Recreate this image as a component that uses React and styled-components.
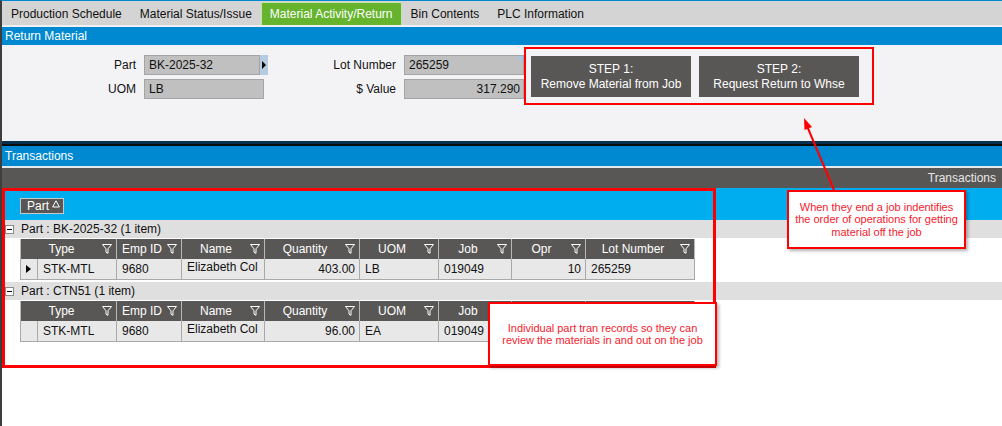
import React from "react"
import styled, { createGlobalStyle } from "styled-components"

const GlobalStyle = createGlobalStyle`
  html, body {
    margin: 0;
    padding: 0;
    background: #fff;
  }
  body {
    font-family: "Liberation Sans", Arial, sans-serif;
    font-size: 12px;
    color: #000;
  }
`

const Page = styled.div`
  position: relative;
  width: 1002px;
  height: 426px;
  overflow: hidden;
  box-sizing: border-box;
  background: #fff;
  border-left: 2px solid #3d3d3d;
  border-top: 1px solid #0088d0;
`

const TabBar = styled.div`
  display: flex;
  align-items: stretch;
  height: 26px;
  box-sizing: border-box;
  background: #d4d4d4;
  border-bottom: 2px solid #eef0f2;
`

const Tab = styled.div`
  display: flex;
  align-items: center;
  padding: 0 8px;
  margin-top: 1px;
  color: ${(p) => (p.$active ? "#fff" : "#111")};
  background: ${(p) => (p.$active ? "#66b42e" : "transparent")};
  border: 1px solid ${(p) => (p.$active ? "#c4e4ae" : "transparent")};
  border-bottom: none;
  border-radius: 2px 2px 0 0;
`

const SectionHeader = styled.div`
  height: ${(p) => p.$h}px;
  line-height: ${(p) => p.$h}px;
  background: #0089d1;
  color: #fff;
  padding-left: 3px;
`

const Panel = styled.div`
  height: 96px;
  box-sizing: border-box;
  background: #f3f3f6;
  display: flex;
  align-items: flex-start;
  padding-top: 2px;
`

const FieldGrid = styled.div`
  display: grid;
  grid-template-columns: ${(p) => p.$label}px auto;
  column-gap: 8px;
  row-gap: 4px;
  margin-top: 8px;
  align-items: center;
`

const Label = styled.div`
  text-align: right;
  color: #111;
`

const FieldWrap = styled.div`
  display: flex;
`

const Field = styled.div`
  position: relative;
  width: ${(p) => p.$w}px;
  height: 20px;
  box-sizing: border-box;
  background: #c0c0c0;
  border: 1px solid #a4a4a4;
  padding: 0 ${(p) => (p.$right ? 3 : 4)}px;
  line-height: 18px;
  text-align: ${(p) => (p.$right ? "right" : "left")};
  color: #111;

  ${(p) =>
    p.$corner &&
    `
    &::after {
      content: "";
      position: absolute;
      top: 0;
      right: 0;
      border-top: 7px solid #a9c4de;
      border-left: 7px solid transparent;
    }
  `}
`

const DropButton = styled.div`
  width: 8px;
  height: 20px;
  background: #b7cbe0;
  display: flex;
  align-items: center;
  justify-content: center;

  &::before {
    content: "";
    border-left: 4px solid #000;
    border-top: 4px solid transparent;
    border-bottom: 4px solid transparent;
  }
`

const StepBox = styled.div`
  display: flex;
  gap: 8px;
  border: 2px solid #f00;
  padding: 7px 13px 6px 5px;
`

const StepButton = styled.div`
  width: 160px;
  height: 41px;
  background: #595755;
  color: #fff;
  display: flex;
  flex-direction: column;
  justify-content: center;
  align-items: center;
  line-height: 15px;
`

const Divider = styled.div`
  height: 5px;
  box-sizing: border-box;
  background: #08314f;
  border-bottom: 2px solid #0c0c0c;
`

const ToolStrip = styled.div`
  height: 22px;
  box-sizing: border-box;
  border-top: 2px solid #e3e8ec;
  background: #595755;
  color: #e6e6e6;
  text-align: right;
  padding-right: 6px;
  line-height: 20px;
`

const GroupByBar = styled.div`
  height: 32px;
  box-sizing: border-box;
  background: #00adef;
  padding: 10px 0 0 18px;
`

const GroupChip = styled.div`
  display: inline-flex;
  align-items: center;
  gap: 3px;
  width: 44px;
  height: 16px;
  box-sizing: border-box;
  padding-left: 6px;
  background: #595755;
  color: #fff;
  border: 1px solid #c9c9c9;
`

const GroupRow = styled.div`
  height: 18px;
  background: #dfdfdf;
  display: flex;
  align-items: center;
  gap: 7px;
  padding-left: 3px;
  margin-top: ${(p) => p.$gap || 0}px;
  color: #111;
`

const Expander = styled.div`
  width: 9px;
  height: 9px;
  box-sizing: border-box;
  background: #fff;
  border: 1px solid #8a8a8a;
  display: flex;
  align-items: center;
  justify-content: center;

  &::before {
    content: "";
    width: 5px;
    height: 1px;
    background: #000;
  }
`

const Grid = styled.div`
  display: grid;
  grid-template-columns: 18px 79px 65px 83px 95px 79px 73px 74px 109px;
  width: max-content;
  margin: 1px 0 0 18px;
`

const HeadCell = styled.div`
  grid-column: span ${(p) => p.$span || 1};
  height: 20px;
  box-sizing: border-box;
  background: #595755;
  color: #fff;
  display: flex;
  align-items: center;
  border-right: 1px solid #b8b8b8;

  &:first-child {
    border-left: 1px solid #b8b8b8;
  }

  span {
    flex: 1;
    text-align: center;
  }

  svg {
    margin-right: 4px;
  }
`

const Cell = styled.div`
  height: 21px;
  box-sizing: border-box;
  background: #e8e8e8;
  border-right: 1px solid #a9a9a9;
  border-bottom: 1px solid #a9a9a9;
  padding: 0 4px 0 5px;
  line-height: ${(p) => (p.$raised ? 16 : 20)}px;
  text-align: ${(p) => (p.$right ? "right" : "left")};
  white-space: nowrap;
  overflow: hidden;
  color: #111;
`

const SelectorCell = styled(Cell)`
  border-left: 1px solid #a9a9a9;
  display: flex;
  align-items: center;
  padding-left: 5px;

  ${(p) =>
    p.$current &&
    `
    &::before {
      content: "";
      border-left: 5px solid #000;
      border-top: 4px solid transparent;
      border-bottom: 4px solid transparent;
    }
  `}
`

const AnnotationBox = styled.div`
  position: absolute;
  left: ${(p) => p.$x}px;
  top: ${(p) => p.$y}px;
  width: ${(p) => p.$w}px;
  height: ${(p) => p.$h}px;
  box-sizing: border-box;
  border: 3px solid #f00;
  pointer-events: none;
`

const Callout = styled(AnnotationBox)`
  border-width: 2px;
  background: #fff;
  box-shadow: 2px 2px 3px rgba(0, 0, 0, 0.3);
  display: flex;
  flex-direction: column;
  justify-content: center;
  align-items: center;
  text-align: center;
  color: #f51a2e;
  font-size: 11px;
  line-height: 12.5px;
`

const ArrowLayer = styled.svg`
  position: absolute;
  left: 0;
  top: 0;
  pointer-events: none;
`

const Funnel = () => (
  <svg width="10" height="10" viewBox="0 0 10 10">
    <path d="M0.5 0.5 H9.5 L6 4.8 V9.3 L4 8.2 V4.8 Z" fill="none" stroke="#fff" strokeWidth="1" />
  </svg>
)

const SortUp = () => (
  <svg width="8" height="8" viewBox="0 0 8 8" style={{ alignSelf: "flex-start", marginTop: 1 }}>
    <path d="M4 0.8 L7.4 7 H0.6 Z" fill="none" stroke="#fff" strokeWidth="1" />
  </svg>
)

const tabs = [
  "Production Schedule",
  "Material Status/Issue",
  "Material Activity/Return",
  "Bin Contents",
  "PLC Information",
]

const columns = [
  { title: "Type", span: 2 },
  { title: "Emp ID" },
  { title: "Name" },
  { title: "Quantity" },
  { title: "UOM" },
  { title: "Job" },
  { title: "Opr" },
  { title: "Lot Number" },
]

const groups = [
  {
    part: "BK-2025-32",
    rows: [{ type: "STK-MTL", emp: "9680", name: "Elizabeth Col", qty: "403.00", uom: "LB", job: "019049", opr: "10", lot: "265259", current: true }],
  },
  {
    part: "CTN51",
    rows: [{ type: "STK-MTL", emp: "9680", name: "Elizabeth Col", qty: "96.00", uom: "EA", job: "019049", opr: "10", lot: "265259" }],
  },
]

function TransactionGroup({ group, gap }) {
  return (
    <>
      <GroupRow $gap={gap}>
        <Expander />
        Part : {group.part} ({group.rows.length} item)
      </GroupRow>
      <Grid>
        {columns.map((c) => (
          <HeadCell key={c.title} $span={c.span}>
            <span>{c.title}</span>
            <Funnel />
          </HeadCell>
        ))}
        {group.rows.map((r, i) => (
          <React.Fragment key={i}>
            <SelectorCell $current={r.current} />
            <Cell>{r.type}</Cell>
            <Cell>{r.emp}</Cell>
            <Cell $raised>{r.name}</Cell>
            <Cell $right>{r.qty}</Cell>
            <Cell>{r.uom}</Cell>
            <Cell>{r.job}</Cell>
            <Cell $right>{r.opr}</Cell>
            <Cell>{r.lot}</Cell>
          </React.Fragment>
        ))}
      </Grid>
    </>
  )
}

export default function App() {
  return (
    <>
      <GlobalStyle />
      <Page>
        <TabBar>
          {tabs.map((t) => (
            <Tab key={t} $active={t === "Material Activity/Return"}>
              {t}
            </Tab>
          ))}
        </TabBar>

        <SectionHeader $h={18}>Return Material</SectionHeader>
        <Panel>
          <FieldGrid $label={134}>
            <Label>Part</Label>
            <FieldWrap>
              <Field $w={116}>BK-2025-32</Field>
              <DropButton />
            </FieldWrap>
            <Label>UOM</Label>
            <Field $w={120}>LB</Field>
          </FieldGrid>
          <FieldGrid $label={128}>
            <Label>Lot Number</Label>
            <Field $w={120} $corner>
              265259
            </Field>
            <Label>$ Value</Label>
            <Field $w={120} $right>
              317.290
            </Field>
          </FieldGrid>
          <StepBox>
            <StepButton>
              <div>STEP 1:</div>
              <div>Remove Material from Job</div>
            </StepButton>
            <StepButton>
              <div>STEP 2:</div>
              <div>Request Return to Whse</div>
            </StepButton>
          </StepBox>
        </Panel>

        <Divider />
        <SectionHeader $h={20}>Transactions</SectionHeader>
        <ToolStrip>Transactions</ToolStrip>
        <GroupByBar>
          <GroupChip>
            Part
            <SortUp />
          </GroupChip>
        </GroupByBar>

        {groups.map((g, i) => (
          <TransactionGroup key={g.part} group={g} gap={i === 0 ? 0 : 2} />
        ))}

        <AnnotationBox $x={0} $y={187} $w={714} $h={180} />

        <ArrowLayer width="1000" height="425">
          <line x1="832" y1="189" x2="805" y2="125" stroke="#f00" strokeWidth="2" />
          <polygon points="802,117 810,126 802.5,129" fill="#f00" />
        </ArrowLayer>

        <Callout $x={785} $y={189} $w={179} $h={59}>
          <div>When they end a job indentifies</div>
          <div>the order of operations for getting</div>
          <div>material off the job</div>
        </Callout>

        <Callout $x={486} $y={301} $w={229} $h={64}>
          <div>Individual part tran records so they can</div>
          <div>review the materials in and out on the job</div>
        </Callout>
      </Page>
    </>
  )
}
